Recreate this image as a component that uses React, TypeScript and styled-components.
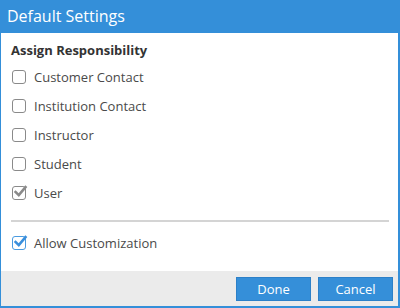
import React from "react";
import styled, { createGlobalStyle } from "styled-components";

const Global = createGlobalStyle`
  html, body { margin: 0; padding: 0; background: #fff; }
  body { font-family: "Open Sans", "Noto Sans", sans-serif; }
`;

const Dialog = styled.div`
  width: 400px;
  height: 308px;
  box-sizing: border-box;
  border-left: 1px solid #348fd9;
  border-right: 2px solid #348fd9;
  border-bottom: 2px solid #348fd9;
  display: flex;
  flex-direction: column;
  background: #fff;
`;

const Header = styled.div`
  height: 33px;
  flex: none;
  margin-left: -1px;
  margin-right: -2px;
  background: #348fd9;
  color: #fff;
  font-size: 16px;
  line-height: 33px;
  padding-left: 7px;
`;

const Body = styled.div`
  flex: 1;
  padding: 8px 9px 0 10px;
  display: flex;
  flex-direction: column;
`;

const SectionTitle = styled.div`
  font-size: 13px;
  font-weight: 700;
  color: #333;
  line-height: 18px;
  margin-bottom: 3px;
`;

const Row = styled.label`
  display: flex;
  align-items: center;
  height: 29px;
  gap: 8px;
  font-size: 13px;
  color: #4a4a4a;
  padding-left: 1px;
`;

const Box = styled.span<{ $accent?: boolean }>`
  width: 14px;
  height: 14px;
  box-sizing: border-box;
  border: 1px solid ${(p) => (p.$accent ? "#4a9be0" : "#8a8a8a")};
  border-radius: 3px;
  position: relative;
  flex: none;
  background: #fff;
`;

const Tick = styled.svg`
  position: absolute;
  left: 1px;
  top: -2px;
`;

const Separator = styled.div`
  height: 2px;
  background: #d4d4d4;
  margin: 13px 0 6px 0;
`;

const Footer = styled.div`
  height: 35px;
  flex: none;
  background: #ebebeb;
  display: flex;
  justify-content: flex-end;
  align-items: center;
  gap: 7px;
  padding-right: 5px;
`;

const Button = styled.button`
  width: 75px;
  height: 24px;
  border: 1px solid #2c80c8;
  background: #358fd9;
  color: #fff;
  font-family: "Open Sans", "Noto Sans", sans-serif;
  font-size: 13px;
  padding: 0;
  margin-top: 1px;
`;

const Check: React.FC<{ label: string; checked?: boolean; accent?: boolean }> = ({ label, checked, accent }) => (
  <Row>
    <Box $accent={accent}>
      {checked && (
        <Tick width="14" height="14" viewBox="0 0 14 14">
          <path
            d="M1.5 7 L4.8 10.2 L11.5 2.2"
            fill="none"
            stroke={accent ? "#3a8fdc" : "#8a8a8a"}
            strokeWidth="2.6"
            strokeLinecap="square"
          />
        </Tick>
      )}
    </Box>
    {label}
  </Row>
);

export default function App() {
  return (
    <>
      <Global />
      <Dialog>
        <Header>Default Settings</Header>
        <Body>
          <SectionTitle>Assign Responsibility</SectionTitle>
          <Check label="Customer Contact" />
          <Check label="Institution Contact" />
          <Check label="Instructor" />
          <Check label="Student" />
          <Check label="User" checked />
          <Separator />
          <Check label="Allow Customization" checked accent />
        </Body>
        <Footer>
          <Button>Done</Button>
          <Button>Cancel</Button>
        </Footer>
      </Dialog>
    </>
  );
}
